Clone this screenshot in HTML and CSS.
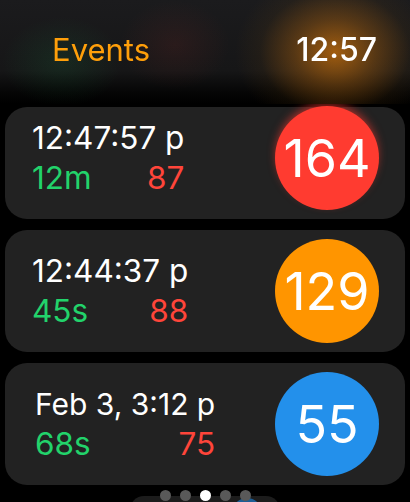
FILE: index.html
```html
<!DOCTYPE html>
<html>
<head>
    <title>Events</title>
    <link rel="stylesheet" href="styles.css">
</head>
<body>
    <div class="screen">
        <div class="list">
            <div class="card card-first">
                <div class="info">
                    <div class="when">12:47:57 p</div>
                    <div class="stats">
                        <span class="duration">12m</span>
                        <span class="rate">87</span>
                    </div>
                </div>
                <div class="badge badge-red badge-glow">164</div>
            </div>

            <div class="card">
                <div class="info">
                    <div class="when">12:44:37 p</div>
                    <div class="stats">
                        <span class="duration">45s</span>
                        <span class="rate">88</span>
                    </div>
                </div>
                <div class="badge badge-orange">129</div>
            </div>

            <div class="card">
                <div class="info info-date">
                    <div class="when when-small">Feb 3, 3:12 p</div>
                    <div class="stats">
                        <span class="duration">68s</span>
                        <span class="rate">75</span>
                    </div>
                </div>
                <div class="badge badge-blue">55</div>
            </div>

            <div class="footer">
                <div class="peek">
                    <div class="peek-dot"></div>
                </div>
                <div class="pager">
                    <span class="dot"></span>
                    <span class="dot"></span>
                    <span class="dot dot-active"></span>
                    <span class="dot"></span>
                    <span class="dot"></span>
                </div>
            </div>
        </div>

        <!-- header floats over the list, like the watch blur bar -->
        <div class="header">
            <span class="title">Events</span>
            <span class="clock">12:57</span>
        </div>
    </div>
</body>
</html>
```

FILE: styles.css
```css
body {
    margin: 0;
    padding: 0;
    background-color: #000;
    font-family: Inter, "Noto Sans", sans-serif;
    color: #fff;
}

.screen {
    width: 410px;
    height: 502px;
    overflow: hidden;
    position: relative;
}

.header {
    position: absolute;
    top: 0;
    left: 0;
    right: 0;
    height: 104px;
    display: flex;
    justify-content: space-between;
    align-items: center;
    padding: 0 33px 6px 52px;
    box-sizing: border-box;
    backdrop-filter: blur(6px);
    background:
        radial-gradient(ellipse 100px 82px at 335px 52px, rgba(215, 120, 12, 0.72) 0, rgba(175, 100, 15, 0.42) 40%, rgba(110, 70, 15, 0.12) 75%, rgba(110, 70, 15, 0) 100%),
        radial-gradient(ellipse 60px 45px at 62px 62px, rgba(30, 200, 100, 0.10), rgba(30, 200, 100, 0) 100%),
        radial-gradient(ellipse 55px 45px at 175px 45px, rgba(255, 60, 50, 0.08), rgba(255, 60, 50, 0) 100%),
        linear-gradient(rgba(27, 27, 29, 1) 0, rgba(22, 22, 23, 1) 68%, rgba(5, 5, 5, 0.95) 90%, rgba(0, 0, 0, 0.7) 100%);
}

.title {
    color: #ff9f0a;
    font-size: 31px;
}

.clock {
    font-size: 32px;
    font-weight: 500;
}

.list {
    padding: 107px 5px 0 5px;
    display: flex;
    flex-direction: column;
    gap: 11px;
}

.card {
    height: 122px;
    box-sizing: border-box;
    background-color: #222;
    border-radius: 22px;
    display: flex;
    justify-content: space-between;
    align-items: center;
    padding: 0 26px 0 27px;
}

/* top card is partly scrolled under the header */
.card-first {
    height: 112px;
    padding-bottom: 10px;
}

.info {
    display: inline-flex;
    flex-direction: column;
    margin-top: -2px;
}

.info-date {
    padding-left: 3px;
}

.when {
    font-size: 31.5px;
    line-height: 40px;
}

.when-small {
    font-size: 30px;
}

.stats {
    display: flex;
    justify-content: space-between;
    font-size: 31.5px;
    line-height: 39px;
}

.duration {
    color: #22d36b;
}

.rate {
    color: #ff453a;
}

.badge {
    width: 104px;
    height: 104px;
    flex-shrink: 0;
    border-radius: 50%;
    display: flex;
    justify-content: center;
    align-items: center;
    font-size: 52px;
}

.badge-red {
    background-color: #ff3b30;
}

.badge-glow {
    box-shadow: 0 -4px 8px -1px rgba(255, 59, 48, 0.6);
}

.badge-orange {
    background-color: #ff9500;
}

.badge-blue {
    background-color: #2390eb;
}

.footer {
    position: relative;
    height: 30px;
}

.peek {
    width: 150px;
    height: 30px;
    margin: 0 auto;
    background-color: #1c1c1c;
    border-radius: 14px 14px 0 0;
    position: relative;
    overflow: hidden;
}

.peek-dot {
    position: absolute;
    right: 18px;
    top: 2px;
    width: 30px;
    height: 30px;
    border-radius: 50%;
    background-color: #1d5d94;
}

.pager {
    position: absolute;
    left: 0;
    right: 0;
    top: -6px;
    display: flex;
    justify-content: center;
    gap: 9px;
}

.dot {
    width: 11px;
    height: 11px;
    border-radius: 50%;
    background-color: #595959;
}

.dot-active {
    background-color: #fff;
}
```
